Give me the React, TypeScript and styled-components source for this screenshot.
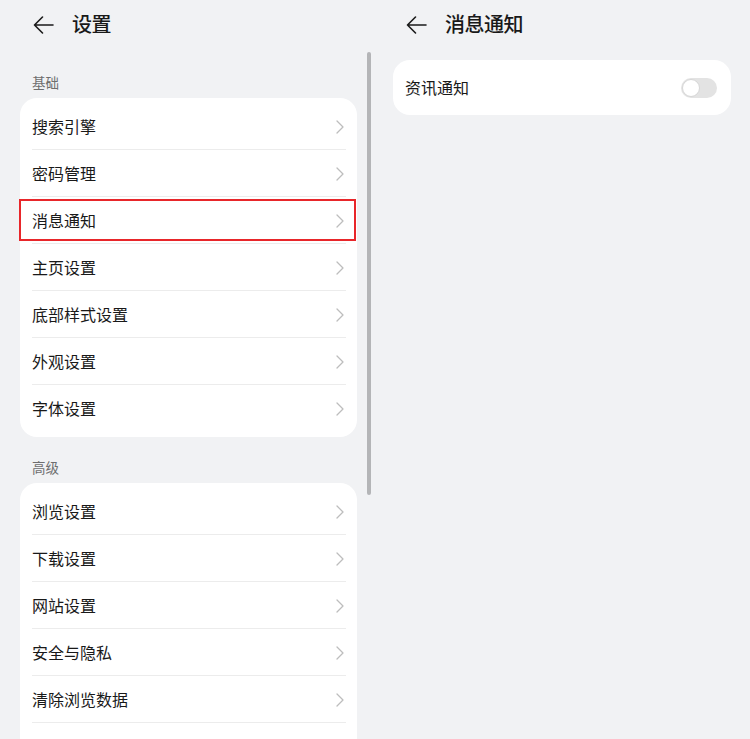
import React from "react";
import styled, { createGlobalStyle } from "styled-components";

const GlobalStyle = createGlobalStyle`
  html, body {
    margin: 0;
    padding: 0;
    background: #f1f2f4;
    overflow: hidden;
  }
  body {
    font-family: "Noto Sans CJK SC", "Noto Sans", sans-serif;
    color: #191919;
  }
`;

const Screen = styled.div`
  display: flex;
  width: 750px;
  height: 739px;
  background: #f1f2f4;
  overflow: hidden;
`;

const LeftPane = styled.div`
  position: relative;
  width: 376px;
  flex: none;
  display: flex;
  flex-direction: column;
`;

const RightPane = styled.div`
  flex: 1;
  display: flex;
  flex-direction: column;
  padding: 0 19px 0 17px;
`;

const Header = styled.div<{ $indent: number }>`
  height: 50px;
  flex: none;
  display: flex;
  align-items: center;
  padding-left: ${(p) => p.$indent}px;
  gap: 18px;
`;

const Title = styled.div`
  font-size: 20px;
  font-weight: 500;
  line-height: 24px;
  padding-bottom: 2px;
  color: #191919;
  letter-spacing: -0.5px;
`;

const BackButton = styled.div`
  width: 22px;
  height: 22px;
  display: flex;
  align-items: center;
  justify-content: center;
`;

const SectionLabel = styled.div<{ $top: number }>`
  margin: ${(p) => p.$top}px 0 3px 32px;
  font-size: 13.5px;
  line-height: 24px;
  padding-bottom: 1px;
  color: #6e6e6e;
`;

const Card = styled.div<{ $open?: boolean }>`
  margin: 0 19px 0 20px;
  background: #ffffff;
  border-radius: 17px;
  padding: 5px 0 ${(p) => (p.$open ? "40px" : "5px")};
`;

const Row = styled.div<{ $divided: boolean }>`
  position: relative;
  height: 47px;
  display: flex;
  align-items: center;
  justify-content: space-between;
  padding: 0 13px 0 12px;
  box-sizing: border-box;
  &::after {
    content: "";
    display: ${(p) => (p.$divided ? "block" : "none")};
    position: absolute;
    left: 12px;
    right: 11px;
    bottom: 0;
    height: 1px;
    background: #ececec;
  }
`;

const RowText = styled.span`
  font-size: 16px;
  line-height: 22px;
  padding-bottom: 2px;
  color: #191919;
`;

const Highlight = styled.div`
  position: absolute;
  left: -1px;
  right: 1px;
  top: 2px;
  bottom: 3px;
  border: 2px solid #e8262a;
  pointer-events: none;
`;

const Scrollbar = styled.div`
  position: absolute;
  left: 367px;
  top: 52px;
  width: 4px;
  height: 443px;
  border-radius: 2px;
  background: #b4b5b7;
`;

const ToggleCard = styled.div`
  margin-top: 10px;
  height: 55px;
  background: #ffffff;
  border-radius: 17px;
  display: flex;
  align-items: center;
  justify-content: space-between;
  padding: 0 14px 0 12px;
`;

const Switch = styled.div`
  position: relative;
  width: 36px;
  height: 20px;
  border-radius: 10px;
  background: #e3e3e3;
`;

const Knob = styled.div`
  position: absolute;
  left: 1px;
  top: 1px;
  width: 18px;
  height: 18px;
  box-sizing: border-box;
  border-radius: 50%;
  background: #ffffff;
  border: 1px solid #d6d6d6;
`;

const BackArrow = () => (
  <svg width="21" height="18" viewBox="0 0 21 18" fill="none">
    <path
      d="M20 9H1.5M9.5 1L1.5 9L9.5 17"
      stroke="#1a1a1a"
      strokeWidth="1.6"
      strokeLinecap="round"
      strokeLinejoin="round"
    />
  </svg>
);

const Chevron = () => (
  <svg width="8" height="14" viewBox="0 0 8 14" fill="none">
    <path
      d="M1 1L7 7L1 13"
      stroke="#bdbdbd"
      strokeWidth="1.3"
      strokeLinecap="round"
      strokeLinejoin="round"
    />
  </svg>
);

const basic = ["搜索引擎", "密码管理", "消息通知", "主页设置", "底部样式设置", "外观设置", "字体设置"];
const advanced = ["浏览设置", "下载设置", "网站设置", "安全与隐私", "清除浏览数据"];

export default function App() {
  return (
    <>
      <GlobalStyle />
      <Screen>
        <LeftPane>
          <Header $indent={32}>
            <BackButton>
              <BackArrow />
            </BackButton>
            <Title>设置</Title>
          </Header>
          <SectionLabel $top={20}>基础</SectionLabel>
          <Card>
            {basic.map((t, i) => (
              <Row key={t} $divided={i < basic.length - 1}>
                <RowText>{t}</RowText>
                <Chevron />
                {t === "消息通知" && <Highlight />}
              </Row>
            ))}
          </Card>
          <SectionLabel $top={18}>高级</SectionLabel>
          <Card $open>
            {advanced.map((t) => (
              <Row key={t} $divided>
                <RowText>{t}</RowText>
                <Chevron />
              </Row>
            ))}
          </Card>
          <Scrollbar />
        </LeftPane>
        <RightPane>
          <Header $indent={12}>
            <BackButton>
              <BackArrow />
            </BackButton>
            <Title>消息通知</Title>
          </Header>
          <ToggleCard>
            <RowText>资讯通知</RowText>
            <Switch>
              <Knob />
            </Switch>
          </ToggleCard>
        </RightPane>
      </Screen>
    </>
  );
}
